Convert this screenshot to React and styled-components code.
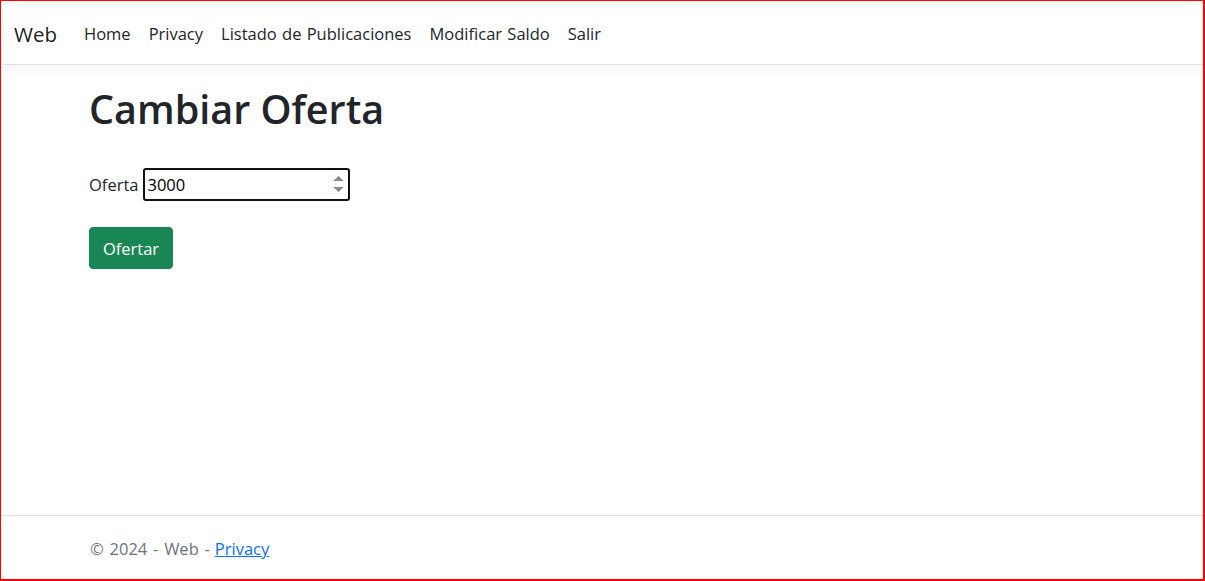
import React from "react";
import styled, { createGlobalStyle } from "styled-components";

const Global = createGlobalStyle`
  html, body { margin: 0; padding: 0; height: 100%; }
  body {
    font-family: "Open Sans", "Noto Sans", sans-serif;
    font-size: 16.5px;
    line-height: 1.5;
    color: #212529;
    background: #fff;
  }
  #root { height: 100%; }
  * { box-sizing: border-box; }
`;

const Frame = styled.div`
  height: 581px;
  border-top: 1px solid #ff0000;
  border-left: 1px solid #ff0000;
  border-right: 2px solid #ff0000;
  border-bottom: 2px solid #ff0000;
  display: flex;
  flex-direction: column;
  overflow: hidden;
`;

const NavBar = styled.header`
  height: 64px;
  flex: none;
  display: flex;
  align-items: center;
  padding: 3px 13px 0;
  background: #fff;
  border-bottom: 1px solid #dee2e6;
  box-shadow: 0 0.25rem 0.75rem rgba(0, 0, 0, 0.05);
  position: relative;
  z-index: 1;
`;

const Brand = styled.a`
  font-size: 20.5px;
  color: rgba(0, 0, 0, 0.9);
  text-decoration: none;
  margin-right: 18px;
`;

const NavList = styled.nav`
  display: flex;
  align-items: center;
`;

const NavLink = styled.a`
  color: #212529;
  text-decoration: none;
  padding: 8px 9px;
  font-size: 16.5px;
  word-spacing: 1px;
`;

const Main = styled.main`
  flex: 1;
  padding: 21px 0 0 88px;
`;

const Title = styled.h1`
  margin: 0 0 8px;
  font-size: 39.5px;
  font-weight: 600;
  line-height: 1.2;
`;

const FormRow = styled.div`
  display: flex;
  align-items: center;
  gap: 5px;
  margin-top: 35px;
`;

const Label = styled.label`
  font-size: 16.5px;
`;

const NumberInput = styled.input`
  width: 207px;
  height: 33px;
  border: 2px solid #101010;
  border-radius: 3px;
  padding: 0 2px;
  font-family: inherit;
  font-size: 16.5px;
  color: #000;
  outline: none;
  background: #fff;
`;

const SubmitButton = styled.button`
  margin-top: 26px;
  width: 84px;
  height: 42px;
  border: 1px solid #198754;
  border-radius: 4px;
  background: #198754;
  color: #fff;
  font-family: inherit;
  font-size: 16.5px;
  cursor: pointer;
`;

const Footer = styled.footer`
  flex: none;
  height: 64px;
  border-top: 1px solid #dee2e6;
  padding: 3px 0 0 89px;
  display: flex;
  align-items: center;
  color: #6c757d;
  font-size: 16.5px;
  word-spacing: 1.5px;
`;

const FooterLink = styled.a`
  color: #0d6efd;
  text-decoration: underline;
  margin-left: 5px;
`;

export default function App() {
  return (
    <>
      <Global />
      <Frame>
        <NavBar>
          <Brand href="#">Web</Brand>
          <NavList>
            <NavLink href="#">Home</NavLink>
            <NavLink href="#">Privacy</NavLink>
            <NavLink href="#">Listado de Publicaciones</NavLink>
            <NavLink href="#">Modificar Saldo</NavLink>
            <NavLink href="#">Salir</NavLink>
          </NavList>
        </NavBar>
        <Main>
          <Title>Cambiar Oferta</Title>
          <FormRow>
            <Label htmlFor="oferta">Oferta</Label>
            <NumberInput id="oferta" type="number" defaultValue={3000} autoFocus />
          </FormRow>
          <SubmitButton type="button">Ofertar</SubmitButton>
        </Main>
        <Footer>
          © 2024 - Web -<FooterLink href="#">Privacy</FooterLink>
        </Footer>
      </Frame>
    </>
  );
}
